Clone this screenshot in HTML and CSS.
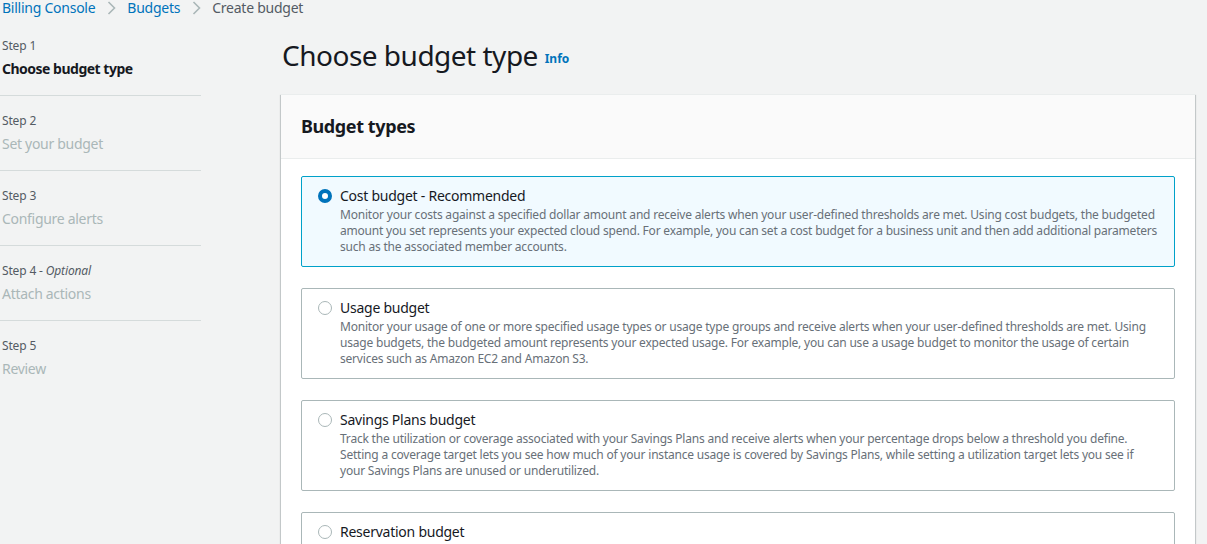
FILE: index.html
```html
<!DOCTYPE html>
<html>
<head>
<meta charset="utf-8">
<link rel="stylesheet" href="styles.css">
</head>
<body>
<div class="page">
  <nav class="crumbs">
    <a class="crumb-link">Billing Console</a>
    <svg class="chev" width="16" height="16" viewBox="0 0 16 16"><path d="M5.5 2 L11.5 8 L5.5 14" fill="none" stroke="#aab7b8" stroke-width="1.6"/></svg>
    <a class="crumb-link">Budgets</a>
    <svg class="chev" width="16" height="16" viewBox="0 0 16 16"><path d="M5.5 2 L11.5 8 L5.5 14" fill="none" stroke="#aab7b8" stroke-width="1.6"/></svg>
    <span class="crumb-current">Create budget</span>
  </nav>
  <div class="layout">
    <aside class="steps">
      <div class="step first">
        <div class="step-num">Step 1</div>
        <div class="step-title active">Choose budget type</div>
      </div>
      <div class="step">
        <div class="step-num">Step 2</div>
        <div class="step-title">Set your budget</div>
      </div>
      <div class="step">
        <div class="step-num">Step 3</div>
        <div class="step-title">Configure alerts</div>
      </div>
      <div class="step">
        <div class="step-num">Step 4 - <i>Optional</i></div>
        <div class="step-title">Attach actions</div>
      </div>
      <div class="step last">
        <div class="step-num">Step 5</div>
        <div class="step-title">Review</div>
      </div>
    </aside>
    <main class="main">
      <h1 class="title">Choose budget type <a class="info">Info</a></h1>
      <section class="panel">
        <header class="panel-head">
          <h2>Budget types</h2>
        </header>
        <div class="panel-body">
          <label class="card selected">
            <span class="radio on"></span>
            <span class="card-text">
              <span class="card-title">Cost budget - Recommended</span>
              <span class="card-desc">Monitor your costs against a specified dollar amount and receive alerts when your user-defined thresholds are met. Using cost budgets, the budgeted amount you set represents your expected cloud spend. For example, you can set a cost budget for a business unit and then add additional parameters such as the associated member accounts.</span>
            </span>
          </label>
          <label class="card">
            <span class="radio"></span>
            <span class="card-text">
              <span class="card-title">Usage budget</span>
              <span class="card-desc">Monitor your usage of one or more specified usage types or usage type groups and receive alerts when your user-defined thresholds are met. Using usage budgets, the budgeted amount represents your expected usage. For example, you can use a usage budget to monitor the usage of certain services such as Amazon EC2 and Amazon S3.</span>
            </span>
          </label>
          <label class="card">
            <span class="radio"></span>
            <span class="card-text">
              <span class="card-title">Savings Plans budget</span>
              <span class="card-desc">Track the utilization or coverage associated with your Savings Plans and receive alerts when your percentage drops below a threshold you define. Setting a coverage target lets you see how much of your instance usage is covered by Savings Plans, while setting a utilization target lets you see if your Savings Plans are unused or underutilized.</span>
            </span>
          </label>
          <label class="card">
            <span class="radio"></span>
            <span class="card-text">
              <span class="card-title">Reservation budget</span>
              <span class="card-desc">Track the utilization or coverage associated with your reservations and receive alerts when your percentage drops below a threshold you define.</span>
            </span>
          </label>
        </div>
      </section>
    </main>
  </div>
</div>
</body>
</html>
```

FILE: styles.css
```css
html, body {
  margin: 0;
  padding: 0;
  background: #f2f3f3;
  overflow: hidden;
}
body {
  font-family: "Noto Sans", "Open Sans", sans-serif;
  color: #16191f;
  height: 544px;
}
.page {
  padding-left: 2px;
}
.crumbs {
  display: flex;
  align-items: center;
  height: 16px;
  font-size: 14px;
  line-height: 16px;
  letter-spacing: -0.25px;
  gap: 8px;
}
.crumb-link {
  color: #0073bb;
}
.crumb-current {
  color: #545b64;
}
.chev {
  display: block;
}
.layout {
  display: flex;
  margin-top: 22px;
}
.steps {
  width: 199px;
  flex: none;
}
.step {
  border-bottom: 1px solid #d5dbdb;
  padding: 17px 0 16px 2px;
  margin-left: -2px;
}
.step.first {
  padding-top: 0;
}
.step.last {
  border-bottom: none;
}
.step-num {
  font-size: 12px;
  line-height: 16px;
  color: #545b64;
  letter-spacing: -0.15px;
}
.step-num i {
  font-style: italic;
}
.step-title {
  font-size: 14px;
  line-height: 20px;
  margin-top: 5px;
  color: #aab7b8;
  letter-spacing: -0.3px;
}
.step-title.active {
  color: #16191f;
  font-weight: 700;
  letter-spacing: -0.5px;
}
.main {
  margin-left: 80px;
  width: 914px;
  flex: none;
  margin-top: -22px;
}
.title {
  margin: 0 0 0 1px;
  padding-top: 21px;
  font-size: 28px;
  font-weight: 400;
  line-height: 36px;
  color: #16191f;
  letter-spacing: -0.5px;
  height: 36px;
  padding-bottom: 21px;
}
.info {
  font-size: 12px;
  font-weight: 700;
  color: #0073bb;
  vertical-align: 3px;
  margin-left: 0;
  letter-spacing: 0;
}
.panel {
  background: #ffffff;
  border-top: 1px solid #eaeded;
  box-shadow: 0 1px 1px 0 rgba(0,28,36,0.3), 1px 1px 1px 0 rgba(0,28,36,0.15), -1px 1px 1px 0 rgba(0,28,36,0.15);
}
.panel-head {
  background: #fafafa;
  border-bottom: 1px solid #eaeded;
  padding: 19px 20px 0;
  height: 44px;
}
.panel-head h2 {
  margin: 0;
  font-size: 18px;
  font-weight: 700;
  line-height: 24px;
  letter-spacing: -0.4px;
}
.panel-body {
  padding: 17px 20px 0;
  display: flex;
  flex-direction: column;
  gap: 21px;
}
.card {
  display: flex;
  align-items: flex-start;
  gap: 8px;
  border: 1px solid #aab7b8;
  border-radius: 2px;
  padding: 9px 15px 0 16px;
  height: 91px;
  box-sizing: border-box;
  background: #ffffff;
}
.card.selected {
  border-color: #00a1c9;
  background: #f1faff;
}
.radio {
  flex: none;
  width: 14px;
  height: 14px;
  border-radius: 50%;
  border: 1px solid #aab7b8;
  box-sizing: border-box;
  margin-top: 3px;
  background: #fff;
}
.radio.on {
  border: 4px solid #0073bb;
}
.card-text {
  display: flex;
  flex-direction: column;
}
.card-title {
  font-size: 14px;
  line-height: 20px;
  color: #16191f;
  letter-spacing: -0.25px;
}
.card-desc {
  font-size: 12px;
  line-height: 16px;
  margin-top: 1px;
  color: #687078;
  letter-spacing: -0.2px;
}
```
